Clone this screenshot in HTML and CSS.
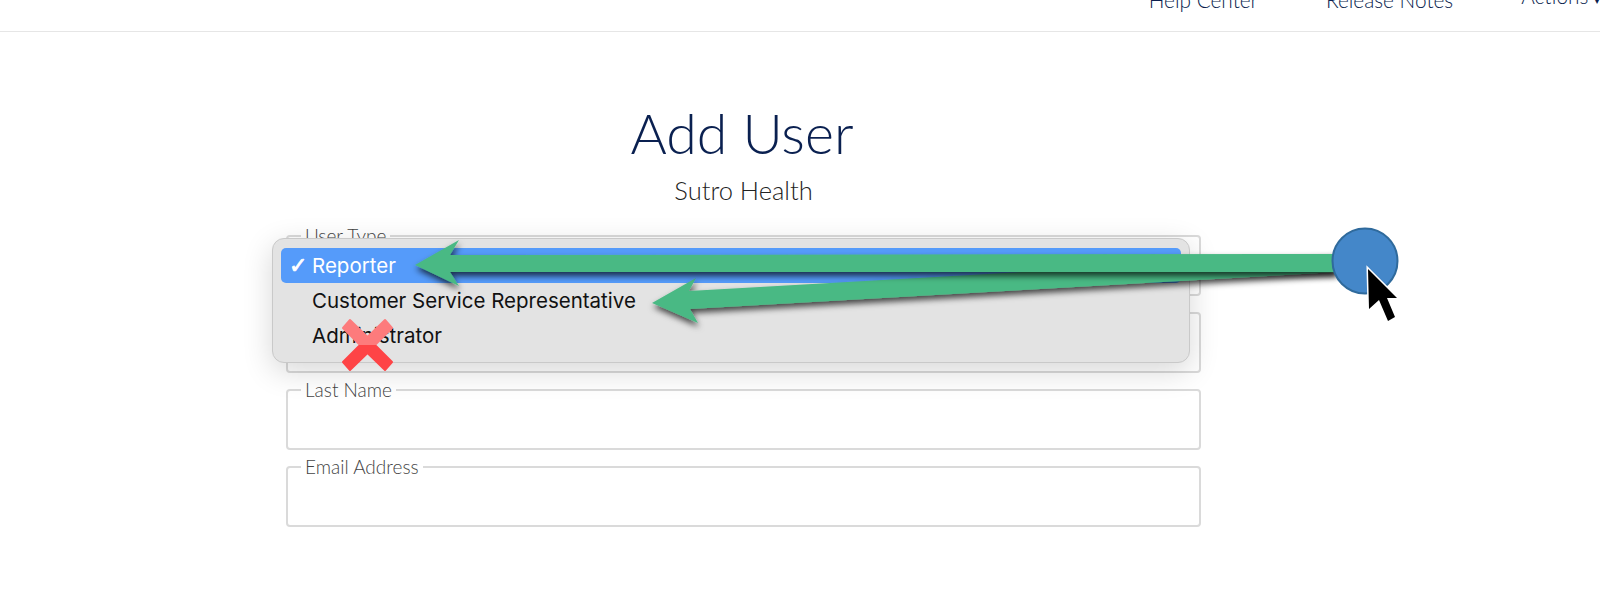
FILE: index.html
```html
<!DOCTYPE html>
<html>
<head>
    <title>Add User</title>
    <link rel="stylesheet" href="styles.css">
</head>
<body>
    <div class="topbar">
        <a class="nav-link" href="#">Help Center</a>
        <a class="nav-link" href="#">Release Notes</a>
        <a class="nav-link" href="#">Actions <span class="caret">▾</span></a>
    </div>

    <div class="container">
        <h1>Add User</h1>
        <p class="subtitle">Sutro Health</p>

        <form class="user-form">
            <fieldset class="field">
                <legend>User Type</legend>
                <div class="field-body"></div>
            </fieldset>
            <fieldset class="field">
                <legend>First Name</legend>
                <div class="field-body"></div>
            </fieldset>
            <fieldset class="field">
                <legend>Last Name</legend>
                <div class="field-body"></div>
            </fieldset>
            <fieldset class="field">
                <legend>Email Address</legend>
                <div class="field-body"></div>
            </fieldset>

            <ul class="dropdown">
                <li class="option selected"><span class="check">✓</span>Reporter</li>
                <li class="option"><span class="check"></span>Customer Service Representative</li>
                <li class="option"><span class="check"></span>Administrator</li>
            </ul>
        </form>
    </div>

    <!-- annotations drawn on top of the screenshot -->
    <svg class="annotations" width="1600" height="596" viewBox="0 0 1600 596">
        <defs>
            <filter id="arrow-shadow" x="-5%" y="-50%" width="110%" height="220%">
                <feDropShadow dx="1" dy="4" stdDeviation="3" flood-color="#000" flood-opacity="0.7"/>
            </filter>
            <linearGradient id="cross-fill" gradientUnits="userSpaceOnUse" x1="0" y1="319" x2="0" y2="371">
                <stop offset="0.5" stop-color="#fd7b7c"/>
                <stop offset="0.5" stop-color="#fe4446"/>
            </linearGradient>
        </defs>

        <polygon class="arrow" points="652,303 696,278 689,291 1336,254 1336,272 690,309 698,323"/>
        <polygon class="arrow" points="415,265 459,240 450,255 1336,254 1336,272 450,272 459,286"/>

        <circle class="click-dot" cx="1365" cy="261" r="32.5"/>

        <polygon class="pointer" points="1368,269 1369,309 1379,300 1388,321 1395,317 1387,298 1397,298"/>

        <polygon class="cross" points="343,328 350,320 367.5,337 385,320 392,328 375,345 392,362 385,370 367.5,353 350,370 343,362 360,345"/>
    </svg>
</body>
</html>
```

FILE: styles.css
```css
body {
    font-family: Lato, Arial, sans-serif;
    font-weight: 300;
    background-color: #fff;
    margin: 0;
    height: 596px;
    overflow: hidden;
    position: relative;
}

.topbar {
    display: flex;
    justify-content: flex-end;
    align-items: flex-end;
    gap: 68px;
    height: 12px;
    padding: 0 0 19px 0;
    border-bottom: 1px solid #e6e6e6;
    overflow: hidden;
}

.nav-link {
    color: #0b1f4f;
    font-size: 20.8px;
    line-height: 24px;
    text-decoration: none;
    white-space: nowrap;
}

.caret {
    font-size: 12px;
}

.container {
    width: 915px;
    margin-left: 286px;
}

h1 {
    color: #0a2050;
    font-size: 55.5px;
    font-weight: 300;
    line-height: 72px;
    text-align: center;
    margin: 65px 3px 0 0;
}

.subtitle {
    color: #222;
    font-size: 25.5px;
    line-height: 30px;
    text-align: center;
    margin: 6px 0 0;
}

.user-form {
    position: relative;
    margin-top: 21px;
    display: flex;
    flex-direction: column;
    gap: 7px;
}

.field {
    margin: 0;
    padding: 0 13px;
    border: 2px solid #dadada;
    border-radius: 4px;
}

.field legend {
    color: #444;
    font-size: 19px;
    line-height: 20px;
    padding: 0 4px;
}

.field-body {
    height: 48px;
}

.dropdown {
    position: absolute;
    top: 12px;
    left: -14px;
    width: 900px;
    margin: 0;
    padding: 9px 8px;
    list-style: none;
    background-color: #e3e3e3;
    border: 1px solid #c9c9c9;
    border-radius: 12px;
    box-shadow: 0 8px 30px rgba(0, 0, 0, 0.16);
    font-family: Inter, Arial, sans-serif;
    font-weight: 400;
    font-size: 20.5px;
    color: #111;
}

.option {
    display: flex;
    align-items: center;
    height: 35px;
    padding-left: 8px;
    border-radius: 5px;
}

.option.selected {
    background-color: #559bfa;
    color: #fff;
}

.check {
    display: inline-block;
    width: 23px;
    font-family: "DejaVu Sans", sans-serif;
    font-size: 22px;
    -webkit-text-stroke: 0.8px #fff;
}

.annotations {
    position: absolute;
    top: 0;
    left: 0;
}

.arrow {
    fill: #4ab984;
    filter: url(#arrow-shadow);
}

.click-dot {
    fill: #4487c9;
    stroke: #2f6a9c;
    stroke-width: 2;
}

.pointer {
    fill: #000;
    stroke: #fff;
    stroke-width: 3;
    stroke-linejoin: miter;
    stroke-miterlimit: 10;
    paint-order: stroke;
}

.cross {
    fill: url(#cross-fill);
    stroke: url(#cross-fill);
    stroke-width: 2;
    stroke-linejoin: round;
}
```
